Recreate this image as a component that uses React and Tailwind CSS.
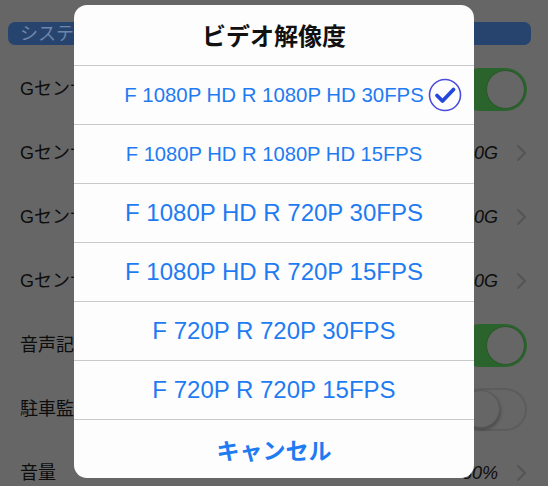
import React from "react";

const font = { fontFamily: '"Liberation Sans", "Noto Sans CJK JP", sans-serif' };

function Chevron() {
  return (
    <svg width="11" height="18" viewBox="0 0 11 18" className="shrink-0">
      <path d="M2 2 L9 9 L2 16" fill="none" stroke="#555555" strokeWidth="2" strokeLinecap="round" strokeLinejoin="round" />
    </svg>
  );
}

function ToggleOn() {
  return (
    <div className="w-[69px] h-[43px] rounded-full bg-[#2b632d] flex items-center justify-end pr-[2px]">
      <div className="w-[39px] h-[39px] rounded-full bg-[#666666] border border-[#285628]" />
    </div>
  );
}

function ToggleOff() {
  return (
    <div className="w-[68px] h-[43px] rounded-full bg-[#666666] border-2 border-[#5c5c5c] flex items-center pl-[1px]">
      <div className="w-[38px] h-[38px] rounded-full bg-[#666666] border border-[#575757] shadow-[1px_2px_3px_rgba(0,0,0,0.25)]" />
    </div>
  );
}

function BgRow({ label, right }) {
  return (
    <div className="h-[64px] flex items-center justify-between pl-[20px] pr-[21px]">
      <span className="text-[18px] text-[#0d0d0d]">{label}</span>
      {right}
    </div>
  );
}

function Value({ text }) {
  return (
    <div className="flex items-center gap-[18px]">
      <span className="text-[18px] italic text-[#0d0d0d]">{text}</span>
      <Chevron />
    </div>
  );
}

function Check() {
  return (
    <svg width="34" height="34" viewBox="0 0 34 34">
      <circle cx="17" cy="17" r="15.5" fill="none" stroke="#4a4ce0" strokeWidth="1.6" />
      <path d="M9 17.5 L14.5 23 L25.5 11.5" fill="none" stroke="#2447dc" strokeWidth="3.8" strokeLinecap="round" strokeLinejoin="round" />
    </svg>
  );
}

const options = [
  { t: "F 1080P HD R 1080P HD 30FPS", s: "text-[20.4px]", check: true },
  { t: "F 1080P HD R 1080P HD 15FPS", s: "text-[20.2px]" },
  { t: "F 1080P HD R 720P 30FPS", s: "text-[24px]" },
  { t: "F 1080P HD R 720P 15FPS", s: "text-[24px]" },
  { t: "F 720P R 720P 30FPS", s: "text-[24px]" },
  { t: "F 720P R 720P 15FPS", s: "text-[24px]" },
];

export default function App() {
  return (
    <div className="relative w-[548px] h-[486px] overflow-hidden bg-[#666666]" style={font}>
      <div className="flex flex-col">
        <div className="mt-[22px] ml-[8px] mr-[17px] h-[23px] rounded-[7px] bg-[#27446f] flex items-center pl-[12px]">
          <span className="text-[18px] text-[#6f86aa] leading-none">システム設定</span>
        </div>
        <div className="h-[12px]" />
        <BgRow label="Gセンサー感度" right={<ToggleOn />} />
        <BgRow label="Gセンサー感度" right={<Value text="1.0G" />} />
        <BgRow label="Gセンサー感度" right={<Value text="1.0G" />} />
        <BgRow label="Gセンサー感度" right={<Value text="1.0G" />} />
        <BgRow label="音声記録" right={<ToggleOn />} />
        <BgRow label="駐車監視" right={<ToggleOff />} />
        <BgRow label="音量" right={<Value text="80%" />} />
      </div>

      <div className="absolute left-[74px] top-[5px] w-[400px] rounded-[13px] bg-[#fdfdfd] overflow-hidden flex flex-col">
        <div className="h-[60px] flex items-center justify-center">
          <span className="text-[24px] font-bold text-[#111111]" style={{ fontFamily: '"Noto Sans CJK JP", sans-serif' }}>ビデオ解像度</span>
        </div>
        {options.map((o, i) => (
          <div key={i} className="relative h-[59px] border-t border-[#c9c9cc] flex items-center justify-center">
            <span className={`${o.s} text-[#1f7bf2] whitespace-nowrap`}>{o.t}</span>
            {o.check && (
              <div className="absolute right-[12px] top-[12px]">
                <Check />
              </div>
            )}
          </div>
        ))}
        <div className="h-[59px] border-t border-[#c9c9cc] flex items-center justify-center">
          <span className="text-[23px] font-bold text-[#1f7bf2]" style={{ fontFamily: '"Noto Sans CJK JP", sans-serif' }}>キャンセル</span>
        </div>
      </div>
    </div>
  );
}
